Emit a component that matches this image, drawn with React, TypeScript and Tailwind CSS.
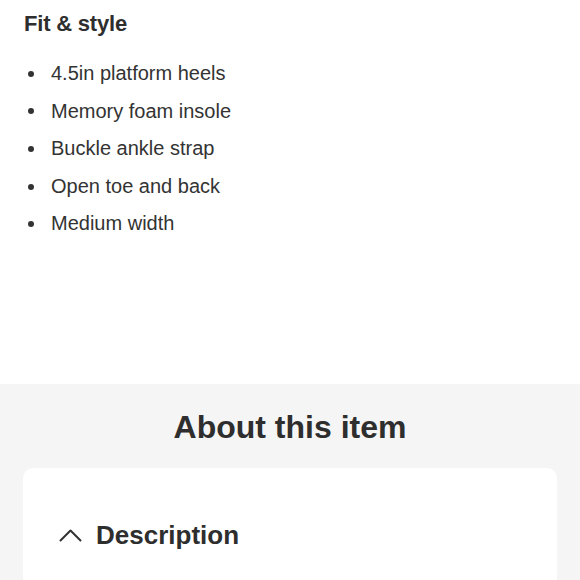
import React from "react";

const items = [
  "4.5in platform heels",
  "Memory foam insole",
  "Buckle ankle strap",
  "Open toe and back",
  "Medium width",
];

export default function App() {
  return (
    <div
      className="w-[580px] h-[580px] overflow-hidden bg-white text-[#333333]"
      style={{ fontFamily: '"Liberation Sans", Arial, sans-serif' }}
    >
      <div className="h-[384px] px-6 pt-[10px]">
        <h2 className="text-[22px] leading-[28px] font-bold tracking-[-0.2px] text-[#2e2e2e]">Fit &amp; style</h2>
        <ul className="mt-[17px] flex flex-col">
          {items.map((t) => (
            <li key={t} className="flex items-center text-[20px] leading-[37.6px]">
              <span className="ml-[4px] mr-[17px] w-[6px] h-[6px] rounded-full bg-[#333333]" />
              <span>{t}</span>
            </li>
          ))}
        </ul>
      </div>
      <div className="h-[196px] bg-[#f5f5f5] px-[23px] pt-[23px]">
        <h2 className="text-center text-[32px] leading-[40px] font-bold text-[#2e2e2e]">About this item</h2>
        <div className="mt-[21px] h-[200px] rounded-[10px] bg-white pt-[51px] pl-[36px]">
          <div className="flex items-center gap-[14px]">
            <svg width="23" height="13" viewBox="0 0 23 13" fill="none" stroke="#333333" strokeWidth="2" strokeLinecap="round" strokeLinejoin="round">
              <path d="M1.5 11.5 L11.5 1.5 L21.5 11.5" />
            </svg>
            <span className="text-[26px] leading-[32px] font-bold text-[#2e2e2e]">Description</span>
          </div>
        </div>
      </div>
    </div>
  );
}
